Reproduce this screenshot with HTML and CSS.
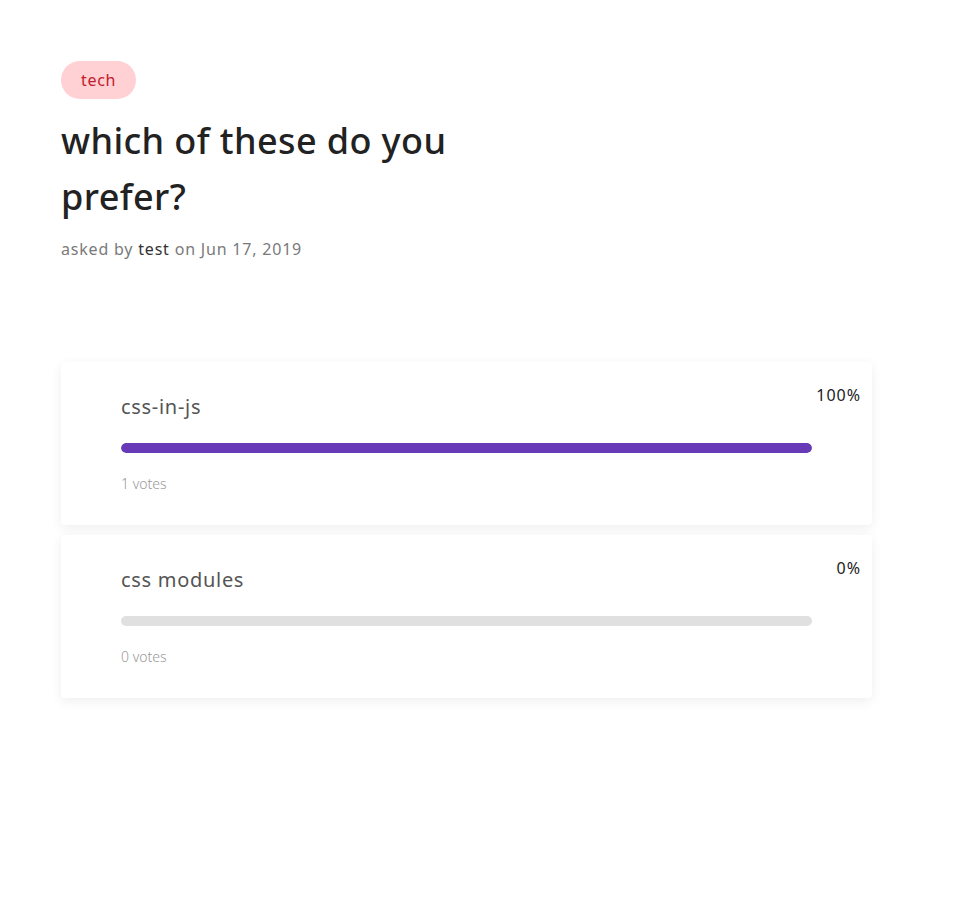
FILE: index.html
```html
<!DOCTYPE html>
<html>
<head>
<meta charset="utf-8">
<link rel="stylesheet" href="styles.css">
</head>
<body>
<main class="page">
  <header class="question">
    <span class="tag">tech</span>
    <h1 class="title">which of these do you prefer?</h1>
    <p class="meta">asked by <span class="author">test</span> on Jun 17, 2019</p>
  </header>
  <section class="options">
    <div class="card">
      <div class="label">css-in-js</div>
      <div class="track"><div class="fill" style="width:100%"></div></div>
      <div class="votes">1 votes</div>
      <div class="percent">100%</div>
    </div>
    <div class="card">
      <div class="label">css modules</div>
      <div class="track"><div class="fill" style="width:0%"></div></div>
      <div class="votes">0 votes</div>
      <div class="percent">0%</div>
    </div>
  </section>
</main>
</body>
</html>
```
FILE: styles.css
```css
html, body {
  margin: 0;
  padding: 0;
  background: #fff;
}
body {
  font-family: "Noto Sans", "Open Sans", sans-serif;
  color: #222;
}
.page {
  padding: 61px 0 80px 61px;
  width: 811px;
}
.question {
  display: flex;
  flex-direction: column;
  align-items: flex-start;
}
.tag {
  display: inline-block;
  background: #ffd0d4;
  color: #c1202b;
  font-size: 16px;
  letter-spacing: 0.7px;
  line-height: 38px;
  height: 38px;
  padding: 0 20px;
  border-radius: 19px;
}
.title {
  margin: 14px 0 0 0;
  font-size: 36px;
  font-weight: 500;
  letter-spacing: 0.4px;
  line-height: 56px;
  max-width: 430px;
  color: #222;
}
.meta {
  margin: 12px 0 0 0;
  font-size: 16px;
  letter-spacing: 0.8px;
  line-height: 24px;
  color: #7a7a7a;
}
.author {
  color: #333;
}
.options {
  margin-top: 101px;
  display: flex;
  flex-direction: column;
  gap: 10px;
}
.card {
  position: relative;
  background: #fff;
  border-radius: 4px;
  box-shadow: 0 3px 12px rgba(0, 0, 0, 0.07);
  padding: 30px 60px 31px 60px;
}
.label {
  font-size: 20px;
  letter-spacing: 0.7px;
  line-height: 30px;
  color: #555;
}
.track {
  margin-top: 21px;
  height: 10px;
  border-radius: 5px;
  background: #e0e0e0;
  overflow: hidden;
}
.fill {
  height: 100%;
  background: #673ab7;
  border-radius: 5px;
}
.votes {
  margin-top: 21px;
  font-size: 14px;
  line-height: 20px;
  color: #999;
  font-weight: 300;
}
.percent {
  position: absolute;
  top: 23px;
  right: 11px;
  font-size: 16px;
  letter-spacing: 1px;
  line-height: 20px;
  color: #222;
}
```
